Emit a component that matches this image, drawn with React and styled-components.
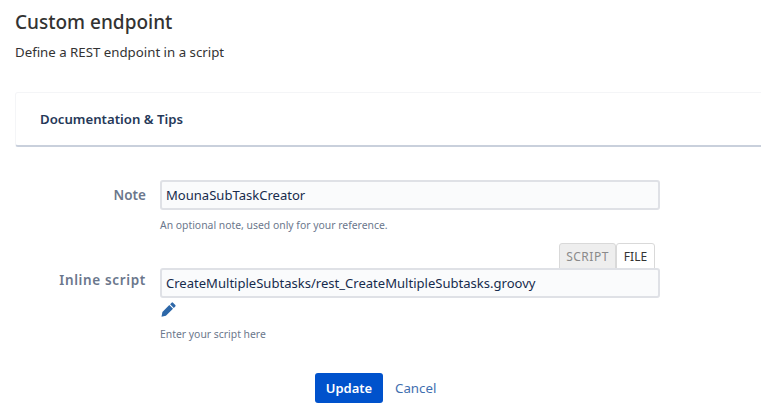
import React from "react";
import styled, { createGlobalStyle } from "styled-components";

const Global = createGlobalStyle`
  html, body { margin: 0; padding: 0; background: #fff; overflow: hidden; }
  body { font-family: "Noto Sans", "Open Sans", sans-serif; color: #172b4d; }
`;
const Page = styled.div`
  width: 761px; height: 414px; overflow: hidden; padding: 9px 0 0 15px; box-sizing: border-box;
`;
const Title = styled.h1`
  margin: 0; font-size: 19px; line-height: 26px; font-weight: 500; color: #333;
`;
const Subtitle = styled.p`
  margin: 8px 0 0; font-size: 13.25px; line-height: 18px; color: #333;
`;
const Card = styled.div`
  margin: 31px -20px 0 0; height: 55px; box-sizing: border-box; padding-left: 24px;
  display: flex; align-items: center; border-radius: 3px; background: #fff;
  border: 1px solid #f4f5f7; border-bottom: 2px solid #c9d0dc;
  font-size: 13.2px; font-weight: 600; color: #253858;
`;
const Form = styled.form`
  margin: 33px 0 0 -15px; display: flex; flex-direction: column;
`;
const Row = styled.div`
  display: grid; grid-template-columns: 146px 500px; column-gap: 14px;
`;
const Label = styled.label`
  text-align: right; font-size: 13.5px; font-weight: 600; line-height: 30px; color: #6b778c;
  letter-spacing: ${p => p.$spread || 0}px; margin-top: ${p => p.$top || 0}px;
`;
const Field = styled.div`
  display: flex; flex-direction: column; align-items: flex-start;
`;
const Input = styled.input`
  width: 500px; height: 30px; box-sizing: border-box; border: 2px solid #dfe1e6; border-radius: 3px;
  background: #fafbfc; padding: 0 4px; font: 13.05px "Noto Sans", sans-serif; color: #172b4d; outline: none;
`;
const Help = styled.div`
  font-size: 10.4px; line-height: 14px; color: #6b778c; margin-top: ${p => p.$top}px;
`;
const Tabs = styled.div`
  display: flex; align-self: flex-end; margin: ${p => p.$top}px 5px -1px 0; height: 26px;
`;
const Tab = styled.button`
  box-sizing: border-box; height: 26px; padding: 0; width: ${p => p.$w}px; border: 1px solid #d9d9d9;
  border-radius: 3px 3px 0 0; font: 12px "Noto Sans", sans-serif;
  letter-spacing: ${p => p.$active ? 0.5 : 0}px;
  background: ${p => p.$active ? "#eee" : "#fff"}; color: ${p => p.$active ? "#8a8a8a" : "#333"};
`;
const Edit = styled.svg`
  width: 15px; height: 15px; margin: 4px 0 0 1px; display: block; fill: #2d67a8;
`;
const Actions = styled.div`
  display: flex; align-items: center; gap: 12px; margin: 32px 0 0 315px;
`;
const Primary = styled.button`
  width: 68px; height: 30px; border: 0; border-radius: 3px; background: #0052cc; color: #fff;
  font: 600 13px "Noto Sans", sans-serif; padding: 0;
`;
const Cancel = styled.a`
  font-size: 13.3px; color: #3f6fb0;
`;

export default function App() {
  return (
    <Page>
      <Global />
      <Title>Custom endpoint</Title>
      <Subtitle>Define a REST endpoint in a script</Subtitle>
      <Card>Documentation &amp; Tips</Card>
      <Form>
        <Row>
          <Label>Note</Label>
          <Field>
            <Input defaultValue="MounaSubTaskCreator" />
            <Help $top={8}>An optional note, used only for your reference.</Help>
          </Field>
        </Row>
        <Row>
          <Label $top={33} $spread={0.65}>Inline script</Label>
          <Field>
            <Tabs $top={11}>
              <Tab type="button" $active $w={57}>SCRIPT</Tab>
              <Tab type="button" $w={39}>FILE</Tab>
            </Tabs>
            <Input defaultValue="CreateMultipleSubtasks/rest_CreateMultipleSubtasks.groovy" />
            <Edit viewBox="0 0 15 15">
              <path d="M10.6.7a1 1 0 0 1 1.4 0l2.3 2.3a1 1 0 0 1 0 1.4l-1.5 1.5-3.7-3.7zM8.3 3l3.7 3.7-7.1 7-4.4 1 .9-4.6z" />
            </Edit>
            <Help $top={10}>Enter your script here</Help>
          </Field>
        </Row>
        <Actions>
          <Primary type="button">Update</Primary>
          <Cancel>Cancel</Cancel>
        </Actions>
      </Form>
    </Page>
  );
}
